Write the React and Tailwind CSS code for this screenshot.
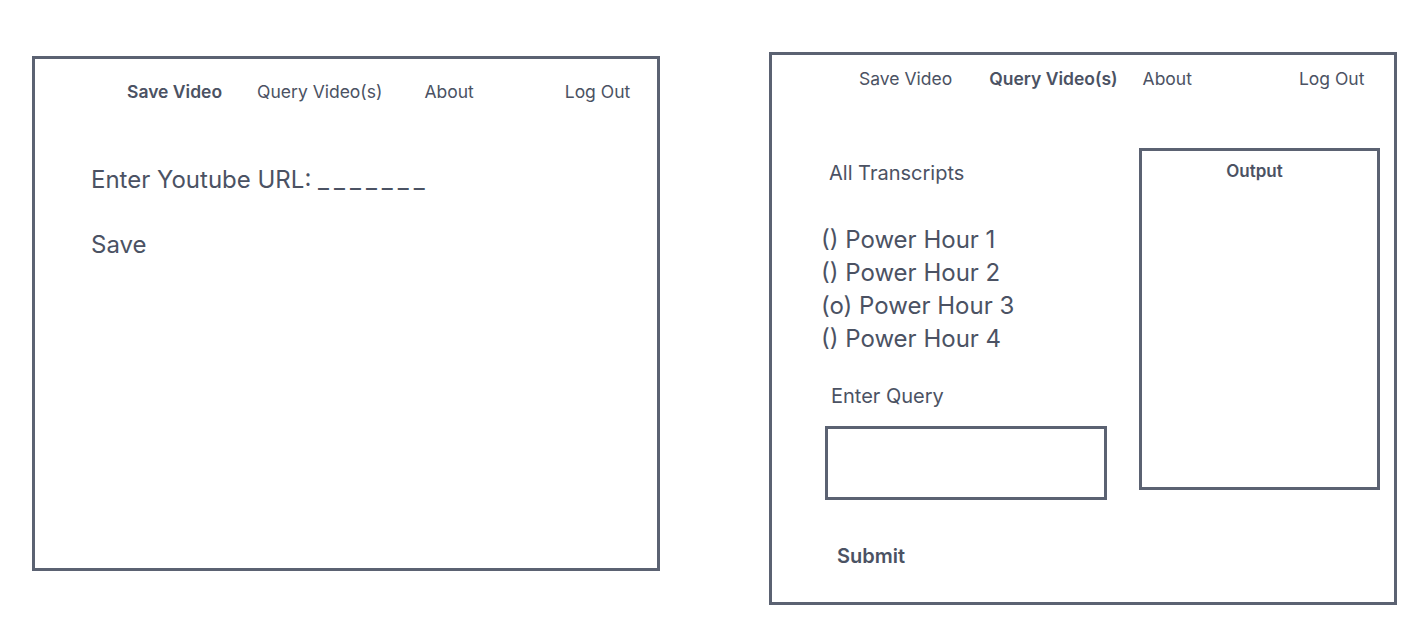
import React from 'react';

const font = { fontFamily: 'Inter, "Noto Sans", sans-serif' };

function SaveVideoFrame() {
    return (
        <div className="w-[628px] h-[515px] mt-[4px] border-[3px] border-[#5b6272] bg-white">
            {/* nav */}
            <div className="flex items-center pt-[21px] pl-[92px] text-[17.5px] leading-6 text-[#4b5263]">
                <span className="font-semibold">Save Video</span>
                <span className="ml-[35px]">Query Video(s)</span>
                <span className="ml-[42px]">About</span>
                <span className="ml-[91px]">Log Out</span>
            </div>

            <div className="pl-[56px] text-[24px] leading-8 text-[#4b5263]">
                <p className="mt-[60px]">
                    Enter Youtube URL: <span className="tracking-[5px]">_______</span>
                </p>
                <p className="mt-[33px]">Save</p>
            </div>
        </div>
    );
}

function QueryVideoFrame() {
    const transcripts = ['() Power Hour 1', '() Power Hour 2', '(o) Power Hour 3', '() Power Hour 4'];

    return (
        <div className="w-[628px] h-[553px] border-[3px] border-[#5b6272] bg-white text-[#4b5263]">
            {/* nav */}
            <div className="flex items-center pt-[12px] pl-[87px] text-[17.5px] leading-6">
                <span>Save Video</span>
                <span className="ml-[37px] font-semibold">Query Video(s)</span>
                <span className="ml-[25px]">About</span>
                <span className="ml-[107px]">Log Out</span>
            </div>

            <div className="flex mt-[57px] pl-[49px]">
                <div className="flex flex-col items-start w-[286px]">
                    <p className="ml-[8px] mt-[11px] text-[20px] leading-7">All Transcripts</p>
                    <ul className="mt-[36px] text-[24px] leading-[33px]">
                        {transcripts.map((t) => (
                            <li key={t}>{t}</li>
                        ))}
                    </ul>
                    <p className="ml-[10px] mt-[27px] text-[20px] leading-7">Enter Query</p>
                    <div className="ml-[4px] mt-[16px] w-[282px] h-[74px] border-[3px] border-[#5b6272]"></div>
                    <button className="ml-[16px] mt-[42px] text-[20px] leading-7 font-semibold">Submit</button>
                </div>

                <div className="ml-[32px] w-[241px] h-[342px] border-[3px] border-[#5b6272] pt-[8px] pr-[10px] text-center">
                    <p className="text-[17px] leading-6 font-semibold">Output</p>
                </div>
            </div>
        </div>
    );
}

export default function App() {
    return (
        <div className="w-[1417px] h-[642px] bg-white" style={font}>
            <div className="flex items-start pt-[52px] pl-[32px]">
                <SaveVideoFrame />
                <div className="ml-[109px]">
                    <QueryVideoFrame />
                </div>
            </div>
        </div>
    );
}
